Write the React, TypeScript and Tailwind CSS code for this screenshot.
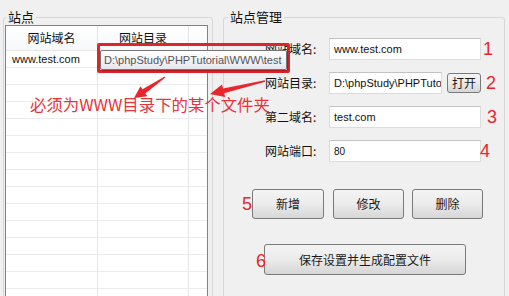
import React from "react";

const cjk = { fontFamily: '"Noto Sans CJK SC", "Liberation Sans", sans-serif' };
const latin = { fontFamily: '"Liberation Sans", "Noto Sans CJK SC", sans-serif' };

function WinButton({ children, className }: { children: React.ReactNode; className: string }) {
  return (
    <div
      className={
        "flex items-center justify-center rounded-[3px] border border-[#7a7a7a] bg-gradient-to-b from-[#f4f4f4] via-[#ebebeb] to-[#d6d6d6] text-[12px] text-[#1a1a1a] " +
        className
      }
      style={cjk}
    >
      {children}
    </div>
  );
}

function Num({ n, className = "" }: { n: string; className?: string }) {
  return (
    <span className={"text-[18px] leading-none font-light text-[#e8262c] " + className} style={latin}>
      {n}
    </span>
  );
}

function Row({ label, children, num, numClass }: { label: string; children: React.ReactNode; num: string; numClass?: string }) {
  return (
    <div className="flex items-center h-[22px]">
      <span className="w-[64px] text-[12px] text-[#111]" style={cjk}>
        {label}
      </span>
      {children}
      <Num n={num} className={numClass} />
    </div>
  );
}

function Input({ value, w, size = "text-[11px]" }: { value: string; w: string; size?: string }) {
  return (
    <div
      className={`${w} h-[22px] bg-white border border-[#dcdcdc] border-t-[#c2c2c2] flex items-center pl-[4px] overflow-hidden whitespace-nowrap ${size} text-[#111]`}
      style={latin}
    >
      {value}
    </div>
  );
}

export default function App() {
  const rows = Array.from({ length: 15 });
  return (
    <div className="relative w-[509px] h-[296px] overflow-hidden bg-[#f0f0f0] flex gap-[10px] pt-[9px] pl-[3px]">
      {/* Left group: 站点 */}
      <fieldset className="w-[210px] h-[320px] border border-[#d6d6d6] rounded-[3px] pl-[1px] pr-[4px] shrink-0">
        <legend className="ml-[1px] px-[2px] text-[13px] leading-[16px] text-[#111]" style={cjk}>
          站点
        </legend>
        <div className="border border-[#828282] border-b-0 bg-white h-[300px]">
          <div className="grid grid-cols-[92px_91px_1fr] h-[25px] border-b border-[#e6e6e6] bg-gradient-to-b from-white to-[#f7f8fa]">
            <div className="flex items-center justify-center border-r border-[#e3e3e3] text-[12px] text-[#111]" style={cjk}>
              网站域名
            </div>
            <div className="flex items-center justify-center border-r border-[#e3e3e3] text-[12px] text-[#111]" style={cjk}>
              网站目录
            </div>
            <div />
          </div>
          {rows.map((_, i) => (
            <div key={i} className="grid grid-cols-[92px_91px_1fr] h-[17px] border-b border-[#ececec]">
              <div className="flex items-center border-r border-[#e6e6e6] pl-[6px] text-[11px] text-[#111]" style={latin}>
                {i === 0 ? "www.test.com" : ""}
              </div>
              <div className="border-r border-[#e6e6e6]" />
              <div />
            </div>
          ))}
        </div>
      </fieldset>

      {/* Right group: 站点管理 */}
      <fieldset className="w-[282px] h-[320px] border border-[#d6d6d6] rounded-[3px] shrink-0">
        <legend className="ml-[4px] px-[2px] text-[13px] leading-[16px] text-[#111]" style={cjk}>
          站点管理
        </legend>
        <div className="pl-[41px]">
          <div className="flex flex-col gap-[12px] pt-[13px]">
            <Row label="网站域名:" num="1" numClass="ml-[2px]">
              <Input value="www.test.com" w="w-[152px]" />
            </Row>
            <Row label="网站目录:" num="2" numClass="ml-[5px]">
              <Input value="D:\phpStudy\PHPTutorial\WWW\test" w="w-[113px]" />
              <WinButton className="ml-[5px] w-[34px] h-[20px] text-[12.5px]">打开</WinButton>
            </Row>
            <Row label="第二域名:" num="3" numClass="ml-[6px]">
              <Input value="test.com" w="w-[152px]" />
            </Row>
            <Row label="网站端口:" num="4" numClass="ml-[-1px]">
              <Input value="80" w="w-[152px]" size="text-[10px]" />
            </Row>
          </div>
          <div className="flex items-center mt-[27px] ml-[-23px]">
            <Num n="5" className="w-[10px]" />
            <WinButton className="w-[72px] h-[30px]">新增</WinButton>
            <WinButton className="w-[71px] h-[30px] ml-[9px]">修改</WinButton>
            <WinButton className="w-[71px] h-[30px] ml-[8px]">删除</WinButton>
          </div>
          <div className="relative flex items-center mt-[25px] ml-[-1px]">
            <WinButton className="w-[202px] h-[31px]">保存设置并生成配置文件</WinButton>
            <Num n="6" className="absolute left-[-8px] top-[8px]" />
          </div>
        </div>
      </fieldset>

      {/* Annotation overlays */}
      <div className="absolute left-[97px] top-[43px] w-[193px] h-[30px] border-[3px] border-[#e3232a] rounded-[2px]" />
      <div
        className="absolute left-[100px] top-[50px] w-[187px] h-[20px] border border-[#767676] rounded-[2px] bg-gradient-to-b from-white to-[#e6e7ee] shadow-[1px_1px_2px_rgba(0,0,0,0.3)] flex items-center pl-[3px] text-[11px] text-[#555] whitespace-nowrap"
        style={latin}
      >
        D:\phpStudy\PHPTutorial\WWW\test
      </div>
      <div
        className="absolute left-[30px] top-[94px] text-[16.4px] leading-[20px] text-[#e8333a] whitespace-nowrap"
        style={cjk}
      >
        必须为WWW目录下的某个文件夹
      </div>
      <svg className="absolute left-0 top-0" width="509" height="296" viewBox="0 0 509 296">
        <polygon
          fill="#e8262c"
          points="134,98 147.3,96.3 145.3,93.4 165.3,77.4 164.7,76.6 142.5,89.2 140.5,86.3"
        />
        <polygon
          fill="#e8262c"
          points="210,94 225.1,97.1 224.2,93.2 265.2,81.7 264.8,80.3 223,88.4 222.1,84.5"
        />
      </svg>
    </div>
  );
}
